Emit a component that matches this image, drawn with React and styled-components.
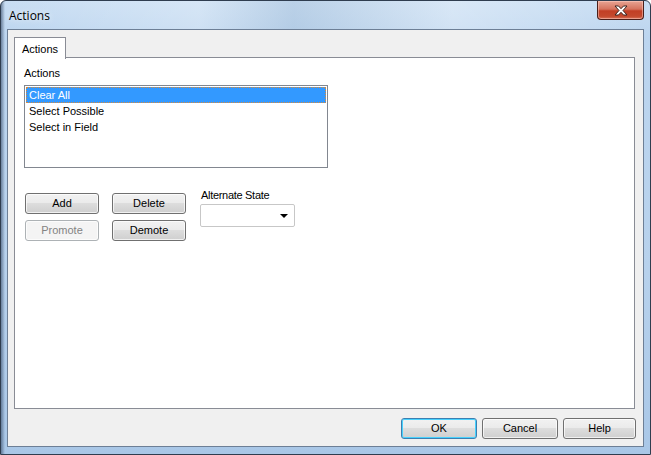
import React from "react";
import styled, { createGlobalStyle } from "styled-components";

const GlobalStyle = createGlobalStyle`
  html, body {
    margin: 0;
    padding: 0;
    background: #ffffff;
  }
  body {
    font-family: "Liberation Sans", Arial, sans-serif;
    font-size: 11px;
    color: #000;
  }
`;

const Window = styled.div`
  width: 651px;
  height: 455px;
  box-sizing: border-box;
  display: flex;
  flex-direction: column;
  padding: 0 6px 7px 6px;
  border: 1px solid #2f3d4f;
  border-radius: 6px 6px 0 0;
  background:
    linear-gradient(90deg, rgba(40, 60, 90, 0.55) 0px, rgba(40, 60, 90, 0) 4px),
    linear-gradient(180deg, #c9def3 0%, #bcd5ef 8%, #b7d1ec 60%, #a9c7e7 100%);
  overflow: hidden;
`;

const TitleBar = styled.div`
  height: 28px;
  display: flex;
  align-items: flex-start;
  justify-content: space-between;
  background: linear-gradient(
    90deg,
    rgba(255, 255, 255, 0) 0%,
    rgba(255, 255, 255, 0.25) 30%,
    rgba(160, 185, 210, 0.35) 45%,
    rgba(255, 255, 255, 0.3) 70%,
    rgba(255, 255, 255, 0) 100%
  );
`;

const Title = styled.span`
  font-family: "Open Sans", "Noto Sans", sans-serif;
  font-size: 12px;
  color: #000;
  margin-top: 6px;
  margin-left: 2px;
  text-shadow: 0 0 6px rgba(255, 255, 255, 0.9);
`;

const CloseButton = styled.div`
  width: 47px;
  height: 19px;
  box-sizing: border-box;
  border: 1px solid #4a1f1a;
  border-top: none;
  border-radius: 0 0 4px 4px;
  background: linear-gradient(180deg, #e8a493 0%, #d5735e 45%, #c23f25 55%, #c4492d 85%, #d9735a 100%);
  display: flex;
  align-items: center;
  justify-content: center;
  box-shadow: inset 0 0 0 1px rgba(255, 210, 200, 0.5);
`;

const Client = styled.div`
  flex: 1;
  display: flex;
  flex-direction: column;
  background: #f0f0f0;
  border: 1px solid #6d7f96;
  padding: 7px 8px 0 6px;
  min-height: 0;
`;

const TabStrip = styled.div`
  display: flex;
  height: 20px;
  position: relative;
  z-index: 1;
`;

const Tab = styled.div`
  width: 50px;
  height: 21px;
  border: 1px solid #898c95;
  border-bottom: none;
  background: #ffffff;
  display: flex;
  align-items: center;
  justify-content: center;
`;

const Panel = styled.div`
  height: 352px;
  box-sizing: border-box;
  border: 1px solid #898c95;
  background: #ffffff;
  padding: 8px 9px 0 9px;
  display: flex;
  flex-direction: column;
  align-items: flex-start;
`;

const Label = styled.div`
  line-height: 14px;
  white-space: nowrap;
`;

const ListBox = styled.div`
  margin-top: 5px;
  width: 304px;
  height: 83px;
  box-sizing: border-box;
  border: 1px solid #828790;
  background: #fff;
  padding: 1px;
`;

const ListItem = styled.div`
  height: 16px;
  line-height: 15px;
  box-sizing: border-box;
  padding-left: 2px;
  color: ${(p) => (p.$selected ? "#ffffff" : "#000000")};
  background: ${(p) => (p.$selected ? "#3399ff" : "transparent")};
  border: 1px dotted ${(p) => (p.$selected ? "#d88a3a" : "transparent")};
`;

const Controls = styled.div`
  margin-top: 25px;
  display: flex;
  align-items: flex-start;
`;

const ButtonGrid = styled.div`
  display: grid;
  grid-template-columns: 74px 74px;
  column-gap: 13px;
  row-gap: 6px;
  margin-left: 1px;
`;

const Button = styled.div`
  width: ${(p) => p.$w || 74}px;
  height: 21px;
  box-sizing: border-box;
  border: 1px solid ${(p) => (p.$default ? "#3c7fb1" : p.$disabled ? "#adb2b5" : "#707070")};
  border-radius: 3px;
  background: ${(p) =>
    p.$disabled
      ? "#f4f4f4"
      : "linear-gradient(180deg, #f2f2f2 0%, #ebebeb 45%, #dddddd 50%, #cfcfcf 100%)"};
  box-shadow: ${(p) =>
    p.$default ? "inset 0 0 0 1px #48d1fd" : "inset 0 0 0 1px rgba(255,255,255,0.7)"};
  color: ${(p) => (p.$disabled ? "#838383" : "#000")};
  display: flex;
  align-items: center;
  justify-content: center;
  line-height: 1;
`;

const AltGroup = styled.div`
  margin-left: 14px;
  margin-top: -5px;
  display: flex;
  flex-direction: column;
`;

const AltLabel = styled.div`
  line-height: 14px;
  letter-spacing: -0.3px;
  padding-left: 1px;
`;

const Combo = styled.div`
  margin-top: 2px;
  width: 95px;
  height: 23px;
  box-sizing: border-box;
  border: 1px solid #c7c7c7;
  border-radius: 2px;
  background: #fff;
  display: flex;
  align-items: center;
  justify-content: flex-end;
  padding-right: 6px;
`;

const Arrow = styled.div`
  width: 0;
  height: 0;
  border-left: 4px solid transparent;
  border-right: 4px solid transparent;
  border-top: 4px solid #000;
`;

const Footer = styled.div`
  flex: 1;
  display: flex;
  justify-content: flex-end;
  align-items: flex-start;
  gap: 5px;
  padding-top: 9px;
  margin-right: -1px;
`;

const CloseGlyph = () => (
  <svg width="14" height="11" viewBox="0 0 14 11">
    <path
      d="M1 1 L4.5 1 L7 3.7 L9.5 1 L13 1 L9 5.5 L13 10 L9.5 10 L7 7.3 L4.5 10 L1 10 L5 5.5 Z"
      fill="#ffffff"
      stroke="#3a2520"
      strokeWidth="1"
      strokeLinejoin="round"
    />
  </svg>
);

const items = ["Clear All", "Select Possible", "Select in Field"];

export default function App() {
  return (
    <>
      <GlobalStyle />
      <Window>
        <TitleBar>
          <Title>Actions</Title>
          <CloseButton>
            <CloseGlyph />
          </CloseButton>
        </TitleBar>
        <Client>
          <TabStrip>
            <Tab>Actions</Tab>
          </TabStrip>
          <Panel>
            <Label>Actions</Label>
            <ListBox>
              {items.map((it, i) => (
                <ListItem key={it} $selected={i === 0}>
                  {it}
                </ListItem>
              ))}
            </ListBox>
            <Controls>
              <ButtonGrid>
                <Button>Add</Button>
                <Button>Delete</Button>
                <Button $disabled>Promote</Button>
                <Button>Demote</Button>
              </ButtonGrid>
              <AltGroup>
                <AltLabel>Alternate State</AltLabel>
                <Combo>
                  <Arrow />
                </Combo>
              </AltGroup>
            </Controls>
          </Panel>
          <Footer>
            <Button $w={76} $default>OK</Button>
            <Button $w={76}>Cancel</Button>
            <Button $w={73}>Help</Button>
          </Footer>
        </Client>
      </Window>
    </>
  );
}
